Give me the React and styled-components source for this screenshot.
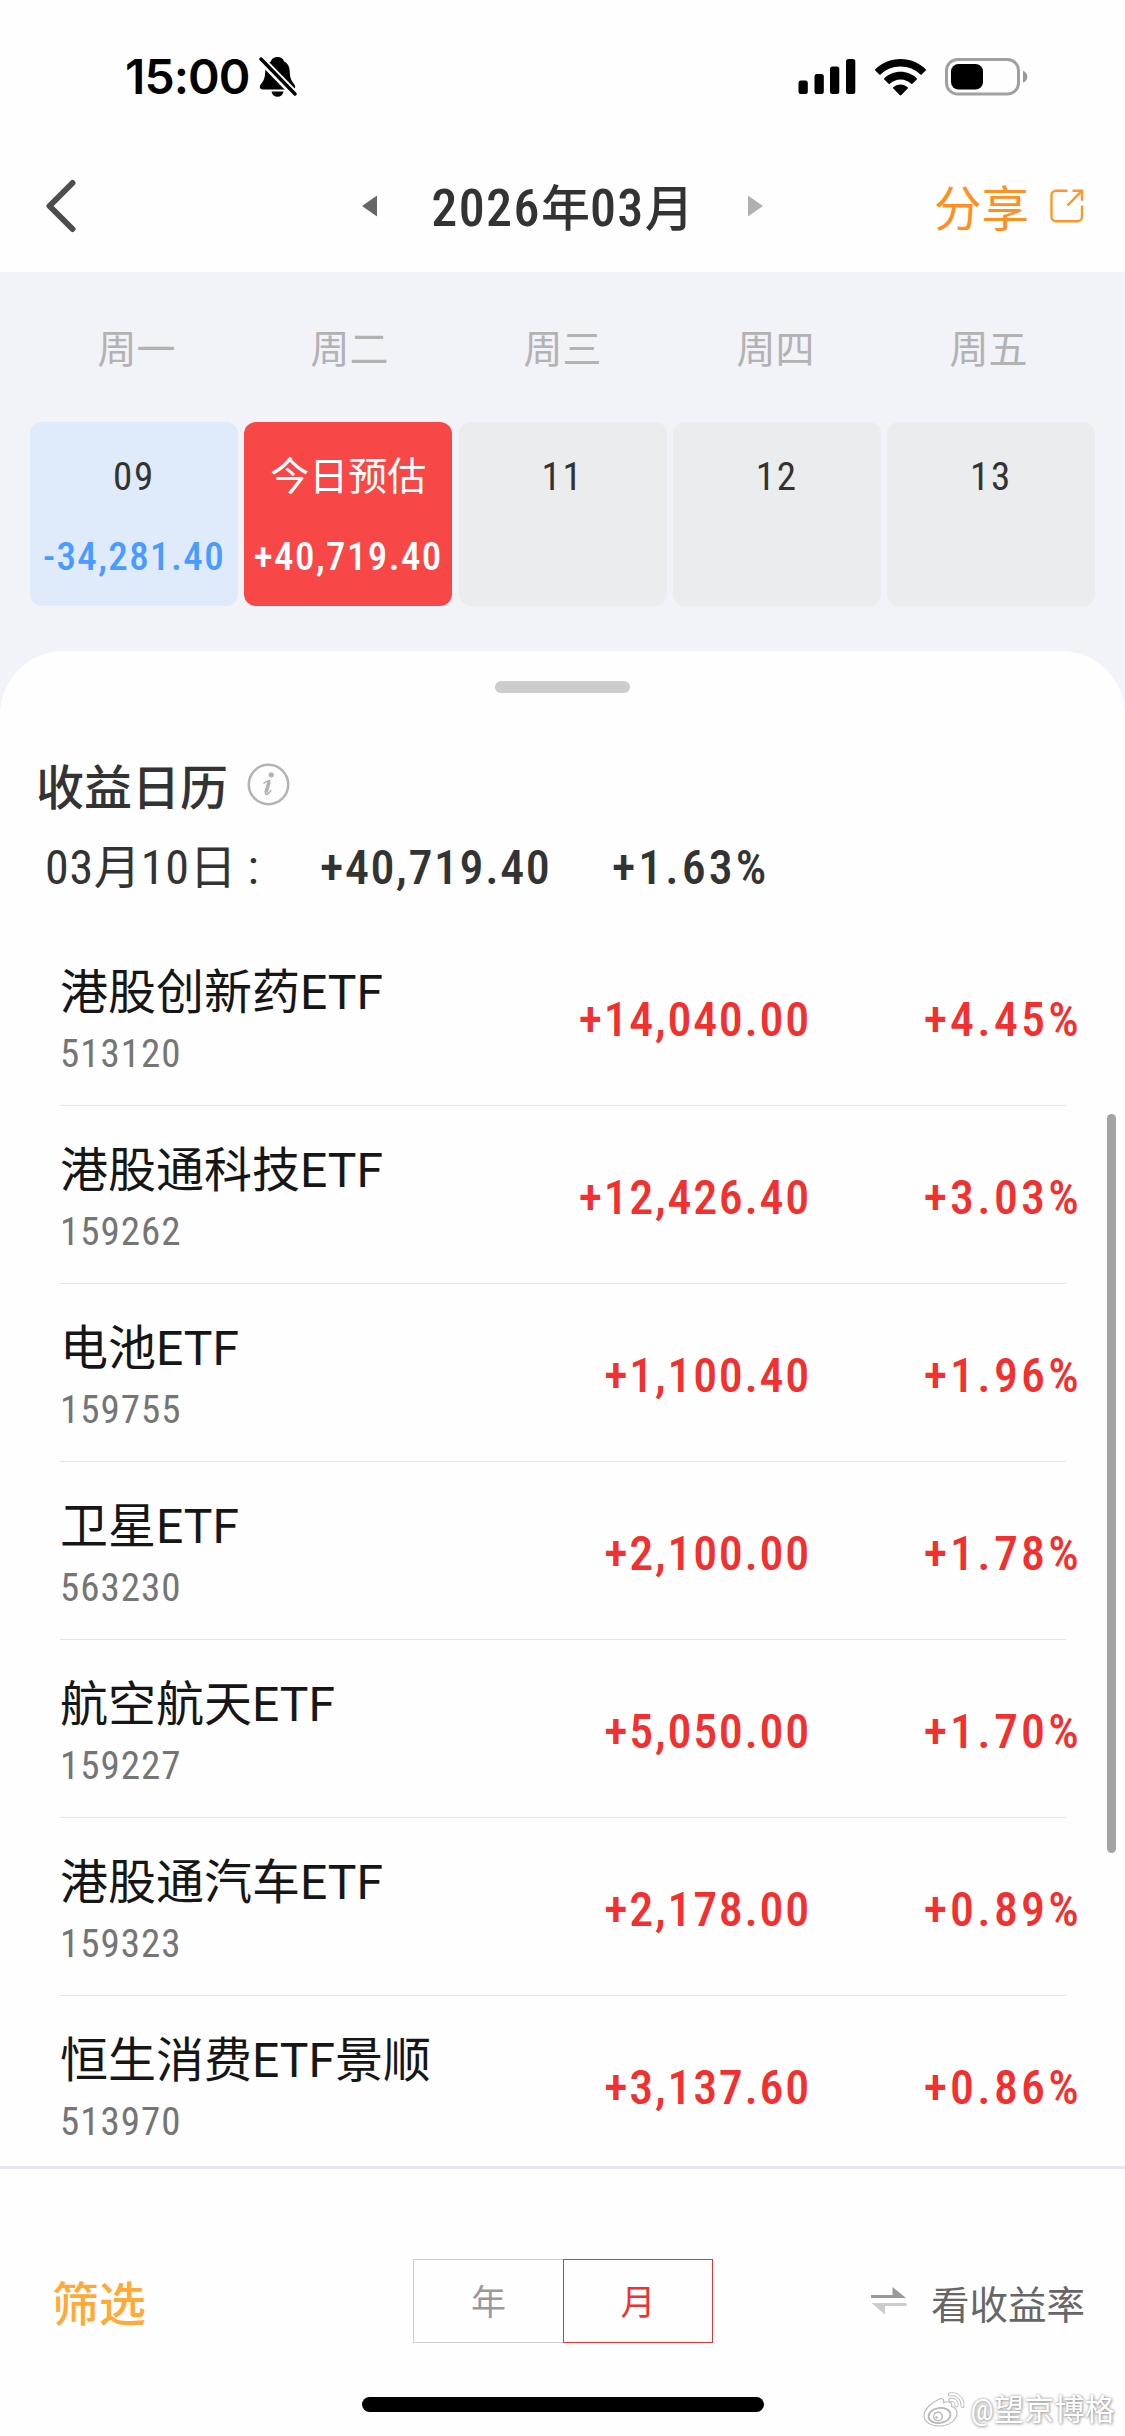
import React from "react";
import styled, { createGlobalStyle } from "styled-components";

const weekdays = ["周一", "周二", "周三", "周四", "周五"];

const days = [
  { label: "09", value: "-34,281.40", kind: "loss" },
  { label: "今日预估", value: "+40,719.40", kind: "today" },
  { label: "11" },
  { label: "12" },
  { label: "13" },
];

const funds = [
  { name: "港股创新药", code: "513120", amount: "+14,040.00", rate: "+4.45%" },
  { name: "港股通科技", code: "159262", amount: "+12,426.40", rate: "+3.03%" },
  { name: "电池", code: "159755", amount: "+1,100.40", rate: "+1.96%" },
  { name: "卫星", code: "563230", amount: "+2,100.00", rate: "+1.78%" },
  { name: "航空航天", code: "159227", amount: "+5,050.00", rate: "+1.70%" },
  { name: "港股通汽车", code: "159323", amount: "+2,178.00", rate: "+0.89%" },
  {
    name: "恒生消费",
    suffix: "景顺",
    code: "513970",
    amount: "+3,137.60",
    rate: "+0.86%",
  },
];

const BellOff = () => (
  <svg width="38" height="42" viewBox="0 0 38 42">
    <path
      d="M18.5 1c-4 0-6 2.300-6.600 4.500C8 7.500 6.500 11 6.300 15c-.2 5-.8 8-2.500 10.500C2 28 .8 29 .8 31c0 1.600 1.200 2.500 3 2.500h29.400c1.800 0 3-.9 3-2.500 0-2-1.200-3-3-5.500-1.700-2.500-2.300-5.500-2.500-10.500-.2-4-1.700-7.500-5.600-9.500C24.500 3.300 22.500 1 18.500 1z"
      fill="#000"
    />
    <path d="M12.500 35.500h12c-.6 3.300-3 5.300-6 5.300s-5.400-2-6-5.300z" fill="#000" />
    <path d="M1 2.500l36 37" stroke="#fff" strokeWidth="8" />
    <path
      d="M2 3l34 35"
      stroke="#000"
      strokeWidth="3.400"
      strokeLinecap="round"
    />
  </svg>
);

const Signal = () => (
  <svg width="58" height="36" viewBox="0 0 58 36">
    <rect x="0.500" y="21.500" width="9.300" height="13.500" rx="2.500" />
    <rect x="16.500" y="15" width="9.300" height="20" rx="2.500" />
    <rect x="32" y="7.500" width="9.300" height="27.500" rx="2.500" />
    <rect x="48" y="0" width="9.300" height="35" rx="2.500" />
  </svg>
);

const Wifi = () => (
  <svg width="51" height="37" viewBox="0 0 51 37">
    <path d="M25.500 0C15.700 0 6.800 3.900.3 10.200c-.4.400-.4.900 0 1.300l4 4c.4.400.9.400 1.300 0C10.800 10.600 17.800 7.600 25.500 7.600s14.700 3 19.900 7.900c.4.400.9.400 1.300 0l4-4c.4-.4.400-.9 0-1.300C44.200 3.900 35.300 0 25.500 0z" />
    <path d="M25.500 12.700c-6.300 0-12 2.500-16.200 6.500-.4.400-.4.900 0 1.300l4.300 4.200c.4.400.9.400 1.200.1 2.800-2.700 6.600-4.300 10.700-4.300s7.900 1.600 10.700 4.300c.3.300.8.300 1.200-.1l4.300-4.200c.4-.4.400-.9 0-1.300-4.200-4-9.900-6.500-16.200-6.500z" />
    <path d="M25.500 25.400c-2.800 0-5.300 1.100-7.200 2.800-.4.400-.4.900 0 1.300l6.400 6.500c.5.500 1.100.5 1.600 0l6.400-6.500c.4-.4.400-.9 0-1.300-1.900-1.700-4.400-2.800-7.200-2.800z" />
  </svg>
);

const Battery = () => (
  <svg width="83" height="38" viewBox="0 0 83 38">
    <rect
      x="1.500"
      y="1.500"
      width="72"
      height="34.500"
      rx="11"
      fill="none"
      stroke="#a0a0a0"
      strokeWidth="3"
    />
    <rect x="6" y="6" width="32" height="25.500" rx="7.500" />
    <path d="M78 12.700c2.500.8 4.400 3.200 4.400 6s-1.900 5.200-4.400 6z" fill="#999" />
  </svg>
);

const BackIcon = () => (
  <svg width="32" height="54" viewBox="0 0 32 54">
    <path
      d="M27.500 4L4.500 27l23 23"
      fill="none"
      stroke="#4d4d4d"
      strokeWidth="6"
      strokeLinecap="round"
      strokeLinejoin="round"
    />
  </svg>
);

const ShareIcon = () => (
  <svg
    width="34"
    height="34"
    viewBox="0 0 34 34"
    fill="none"
    stroke="#ff9626"
    strokeWidth="2.400"
  >
    <path d="M17.500 1.700H6A4.500 4.500 0 0 0 1.500 6.200v21.600a4.500 4.500 0 0 0 4.500 4.500h21.500a4.500 4.500 0 0 0 4.500-4.500V16.500" />
    <path d="M22.500 1.700H32v10" />
    <path d="M31.500 2.200L17.500 16.500" />
  </svg>
);

const InfoIcon = () => (
  <svg width="43" height="43" viewBox="0 0 43 43">
    <circle
      cx="21.500"
      cy="21.500"
      r="19.700"
      fill="none"
      stroke="#b3b3b3"
      strokeWidth="2.500"
    />
    <circle cx="24.200" cy="11.800" r="2.600" fill="#b3b3b3" />
    <path
      d="M16.500 20.500c2-1.900 4-3 6-3.100l-4 11.800c-.5 2 .6 2.800 2.200 1.800 1.300-.8 2.500-2.200 3.500-3.800"
      fill="none"
      stroke="#b3b3b3"
      strokeWidth="1.500"
    />
    <path d="M22.200 18.500l-3.200 11" stroke="#b3b3b3" strokeWidth="3.600" />
  </svg>
);

const SwapIcon = () => (
  <svg width="36" height="28" viewBox="0 0 36 28">
    <path d="M0 8h21.500V0L35 11H0z" fill="#999" />
    <path d="M35.500 19H14v8.500L.5 16h35z" fill="#ccc" />
  </svg>
);

const WeiboIcon = () => (
  <svg width="42" height="36" viewBox="0 0 42 36">
    <path
      d="M15.500 7.500c3.500-2 6-.5 5 3.300 4.500-1.900 9.500-1.300 8 3.700 3.500 1 5.500 3 5.500 6.500 0 7-8 13-17.500 13S1 29.500 1 23.500C1 18 7.500 11 15.500 7.500z"
      fill="#fff"
      stroke="#bdbdbd"
      strokeWidth="1.200"
    />
    <ellipse
      cx="16.500"
      cy="23.500"
      rx="11"
      ry="7.500"
      transform="rotate(-8 16.500 23.500)"
      fill="#fff"
      stroke="#b8b8b8"
      strokeWidth="1.800"
    />
    <circle cx="15" cy="24.500" r="4.300" fill="none" stroke="#b8b8b8" strokeWidth="1.400" />
    <circle cx="13.500" cy="25.500" r="1.300" fill="#b8b8b8" />
    <path
      d="M27 2.500c7-1.500 13 4 12.500 11.500M27.500 8c4-.8 6.500 2 6 5.500"
      fill="none"
      stroke="#bdbdbd"
      strokeWidth="4"
      strokeLinecap="round"
    />
    <path
      d="M27 2.500c7-1.500 13 4 12.500 11.500M27.500 8c4-.8 6.500 2 6 5.500"
      fill="none"
      stroke="#fff"
      strokeWidth="2.200"
      strokeLinecap="round"
    />
  </svg>
);

const App = () => {
  return (
    <>
      <GlobalStyle />
      <Page>
        <StatusBar>
          <Clock>15:00</Clock>
          <BellOff />
          <StatusIcons>
            <Signal />
            <Wifi />
            <Battery />
          </StatusIcons>
        </StatusBar>

        <Header>
          <BackIcon />
          <MonthPicker>
            <Triangle $dir="left" />
            <Month>
              2026<b>年</b>03<b>月</b>
            </Month>
            <Triangle $dir="right" />
          </MonthPicker>
          <Share>
            <span>分享</span>
            <ShareIcon />
          </Share>
        </Header>

        <Calendar>
          <Weekdays>
            {weekdays.map((day) => (
              <span key={day}>{day}</span>
            ))}
          </Weekdays>
          <Days>
            {days.map((day) => (
              <Day key={day.label} $kind={day.kind}>
                <DayLabel $cjk={day.kind === "today"}>{day.label}</DayLabel>
                {day.value && <DayValue>{day.value}</DayValue>}
              </Day>
            ))}
          </Days>
        </Calendar>

        <SheetWrap>
          <Sheet>
            <Handle />
            <SheetTitle>
              收益日历
              <InfoIcon />
            </SheetTitle>
            <Summary>
              <SummaryDate>
                03<i>月</i>10<i>日</i>
                <Colon>:</Colon>
              </SummaryDate>
              <Figure>+40,719.40</Figure>
              <Figure $wide>+1.63%</Figure>
            </Summary>

            <FundList>
              {funds.map((fund) => (
                <Fund key={fund.code}>
                  <div>
                    <FundName>
                      {fund.name}
                      <span>ETF</span>
                      {fund.suffix}
                    </FundName>
                    <FundCode>{fund.code}</FundCode>
                  </div>
                  <Gain>{fund.amount}</Gain>
                  <Gain $wide>{fund.rate}</Gain>
                </Fund>
              ))}
            </FundList>
            <ScrollThumb />
          </Sheet>
        </SheetWrap>

        <Footer>
          <Filter>筛选</Filter>
          <Segments>
            <Segment>年</Segment>
            <Segment $active>月</Segment>
          </Segments>
          <RateToggle>
            <SwapIcon />
            <span>看收益率</span>
          </RateToggle>
        </Footer>
        <HomeIndicator />
        <Watermark>
          <WeiboIcon />
          <span>@望京博格</span>
        </Watermark>
      </Page>
    </>
  );
};

const GlobalStyle = createGlobalStyle`
  * {
    box-sizing: border-box;
  }

  body {
    margin: 0;
    background-color: #fff;
    font-family: Roboto, "Noto Sans CJK SC", sans-serif;
    font-stretch: 75%;
  }

  svg {
    display: block;
    flex-shrink: 0;
  }
`;

const Page = styled.div`
  position: relative;
  width: 1125px;
  height: 2436px;
  overflow: hidden;
  background-color: #fefefe;
  color: #333;
`;

const StatusBar = styled.div`
  display: flex;
  align-items: center;
  height: 154px;
  padding: 0 97px 0 125px;
`;

const Clock = styled.div`
  width: 134px;
  padding-bottom: 1px;
  font-family: Inter, sans-serif;
  font-size: 48px;
  font-weight: 600;
  letter-spacing: -0.9px;
  color: #000;
`;

const StatusIcons = styled.div`
  display: flex;
  align-items: center;
  gap: 19px;
  margin-left: auto;
`;

const Header = styled.header`
  display: grid;
  grid-template-columns: 200px 1fr 200px;
  align-items: center;
  height: 118px;
  padding: 0 41px 14px 45px;
`;

const MonthPicker = styled.div`
  display: flex;
  align-items: center;
  justify-content: space-between;
  width: 401px;
  margin-left: 117px;
`;

const Triangle = styled.div`
  width: 15px;
  height: 21px;
  background-color: ${(p) => (p.$dir === "left" ? "#666" : "#b0b0b0")};
  clip-path: ${(p) =>
    p.$dir === "left"
      ? "polygon(100% 0, 100% 100%, 0 50%)"
      : "polygon(0 0, 100% 50%, 0 100%)"};
`;

const Month = styled.div`
  display: flex;
  align-items: baseline;
  padding-top: 6px;
  font-size: 52px;
  font-weight: 500;
  line-height: 60px;
  letter-spacing: 1.4px;

  b {
    font-size: 49px;
    font-weight: 500;
    letter-spacing: 0;
  }
`;

const Share = styled.div`
  display: flex;
  align-items: center;
  justify-content: flex-end;
  gap: 21px;
  font-size: 47.500px;
  line-height: 60px;
  color: #ff9020;

  span {
    padding-top: 8px;
  }
`;

const Calendar = styled.section`
  height: 379px;
  padding: 47px 30px 0;
  background-color: #f2f3f9;
`;

const Weekdays = styled.div`
  display: grid;
  grid-template-columns: repeat(5, 213px);
  height: 103px;
  font-size: 39px;
  line-height: 62px;
  text-align: center;
  color: #b2b2b2;
`;

const Days = styled.div`
  display: grid;
  grid-template-columns: repeat(5, 208px);
  justify-content: space-between;
`;

const dayColors = {
  loss: { bg: "#dfeafa", value: "#4a9bff" },
  today: { bg: "#f84747", value: "#fff" },
  empty: { bg: "#ebecee", value: "#333" },
};

const Day = styled.div`
  height: 184px;
  padding-top: 30px;
  border-radius: 12px;
  text-align: center;
  white-space: nowrap;
  background-color: ${(p) => dayColors[p.$kind || "empty"].bg};
  color: ${(p) => dayColors[p.$kind || "empty"].value};
`;

const DayLabel = styled.div`
  font-size: 39px;
  line-height: 50px;
  letter-spacing: ${(p) => (p.$cjk ? "0" : "1.8px")};
  color: ${(p) => (p.$cjk ? "#fff" : "#333")};
`;

const DayValue = styled.div`
  margin-top: 30px;
  font-size: 39px;
  font-weight: 500;
  line-height: 50px;
  letter-spacing: 1.4px;
`;

const SheetWrap = styled.div`
  background-color: #f2f3f9;
`;

const Sheet = styled.section`
  position: relative;
  height: 1515px;
  padding: 30px 0 0;
  overflow: hidden;
  border-radius: 64px 64px 0 0;
  background-color: #fefefe;
`;

const Handle = styled.div`
  width: 135px;
  height: 12px;
  margin: 0 auto;
  border-radius: 6px;
  background-color: #ccc;
`;

const SheetTitle = styled.h2`
  display: flex;
  align-items: center;
  gap: 19px;
  height: 60px;
  margin: 61px 0 0 36px;
  font-size: 48px;
  font-weight: 500;
`;

const Summary = styled.div`
  display: grid;
  grid-template-columns: 275px 292px 1fr;
  height: 60px;
  margin: 24px 0 0 45px;
  font-size: 48px;
  line-height: 60px;
`;

const SummaryDate = styled.div`
  display: flex;
  align-items: baseline;
  letter-spacing: 0.7px;

  i {
    font-size: 47px;
    font-style: normal;
    letter-spacing: 0;
  }
`;

const Colon = styled.span`
  margin-left: 11px;
`;

const Figure = styled.div`
  font-weight: 500;
  letter-spacing: ${(p) => (p.$wide ? "3px" : "1.6px")};
`;

const FundList = styled.div`
  margin-top: 30px;
`;

const Fund = styled.div`
  display: grid;
  grid-template-columns: 440px 308px 270px;
  height: 178px;
  margin: 0 59px 0 60px;
  padding-top: 35px;
  border-bottom: 1px solid #e3e3e8;
`;

const FundName = styled.div`
  display: flex;
  align-items: baseline;
  height: 66px;
  font-size: 48px;
  line-height: 60px;
  color: #161616;

  span {
    font-stretch: 100%;
  }
`;

const FundCode = styled.div`
  font-size: 39px;
  line-height: 50px;
  letter-spacing: 1px;
  color: #757575;
`;

const Gain = styled.div`
  margin-right: ${(p) => (p.$wide ? "-4px" : "-3px")};
  padding-top: 27px;
  font-size: 48px;
  font-weight: 500;
  line-height: 60px;
  letter-spacing: ${(p) => (p.$wide ? "3.200px" : "1.700px")};
  text-align: right;
  color: #f23030;
`;

const ScrollThumb = styled.div`
  position: absolute;
  top: 463px;
  right: 9px;
  width: 9px;
  height: 739px;
  border-radius: 5px;
  background-color: #a3a3a3;
`;

const Footer = styled.footer`
  display: grid;
  grid-template-columns: 361px 301px 1fr;
  align-items: center;
  height: 231px;
  padding: 90px 40px 54px 52px;
  border-top: 3px solid #e6e5ef;
`;

const Filter = styled.div`
  padding-top: 8px;
  font-size: 47px;
  font-weight: 500;
  line-height: 60px;
  color: #ffaa38;
`;

const Segments = styled.div`
  display: flex;
`;

const Segment = styled.div`
  width: 150px;
  height: 84px;
  border: 1px solid ${(p) => (p.$active ? "#f23030" : "#ccc")};
  border-right-width: ${(p) => (p.$active ? "1px" : "0")};
  padding-top: 4px;
  font-size: 35px;
  line-height: 80px;
  text-align: center;
  color: ${(p) => (p.$active ? "#f23030" : "#999")};
`;

const RateToggle = styled.div`
  display: flex;
  align-items: center;
  justify-content: flex-end;
  gap: 24px;
  font-size: 38.500px;
  color: #666;

  span {
    padding-top: 2px;
  }
`;

const HomeIndicator = styled.div`
  width: 402px;
  height: 15px;
  margin: 0 auto;
  border-radius: 8px;
  background-color: #000;
`;

const Watermark = styled.div`
  position: absolute;
  right: 10px;
  bottom: 7px;
  display: flex;
  align-items: center;
  gap: 5px;
  font-size: 30px;
  line-height: 38px;
  color: #fff;
  text-shadow: 0 0 3px #999, 1px 1px 3px #aaa;

  span {
    letter-spacing: 0.3px;
  }
`;

export default App;
